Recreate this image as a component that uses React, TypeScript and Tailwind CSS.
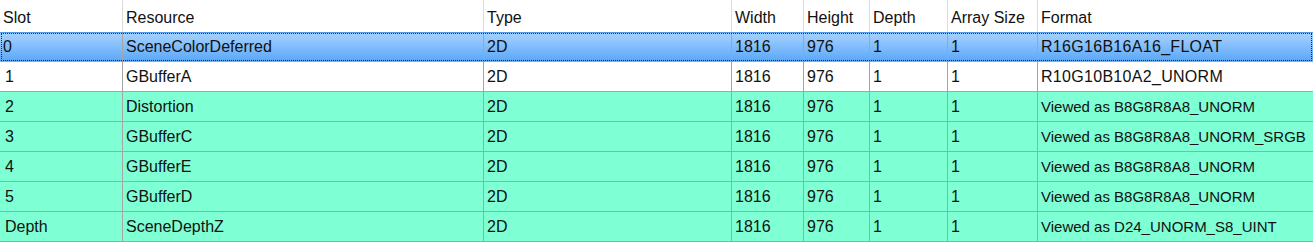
import React from "react";

const cols = "grid grid-cols-[123px_361px_248px_72px_66px_78px_90px_1fr]";

type Row = { slot: string; res: string; type: string; w: string; h: string; d: string; a: string; fmt: string; kind: "sel" | "white" | "green" };

const rows: Row[] = [
  { slot: "0", res: "SceneColorDeferred", type: "2D", w: "1816", h: "976", d: "1", a: "1", fmt: "R16G16B16A16_FLOAT", kind: "sel" },
  { slot: "1", res: "GBufferA", type: "2D", w: "1816", h: "976", d: "1", a: "1", fmt: "R10G10B10A2_UNORM", kind: "white" },
  { slot: "2", res: "Distortion", type: "2D", w: "1816", h: "976", d: "1", a: "1", fmt: "Viewed as B8G8R8A8_UNORM", kind: "green" },
  { slot: "3", res: "GBufferC", type: "2D", w: "1816", h: "976", d: "1", a: "1", fmt: "Viewed as B8G8R8A8_UNORM_SRGB", kind: "green" },
  { slot: "4", res: "GBufferE", type: "2D", w: "1816", h: "976", d: "1", a: "1", fmt: "Viewed as B8G8R8A8_UNORM", kind: "green" },
  { slot: "5", res: "GBufferD", type: "2D", w: "1816", h: "976", d: "1", a: "1", fmt: "Viewed as B8G8R8A8_UNORM", kind: "green" },
  { slot: "Depth", res: "SceneDepthZ", type: "2D", w: "1816", h: "976", d: "1", a: "1", fmt: "Viewed as D24_UNORM_S8_UINT", kind: "green" },
];

const headers = ["Slot", "Resource", "Type", "Width", "Height", "Depth", "Array Size", "Format"];

export default function App() {
  return (
    <div
      className="w-[1313px] h-[249px] bg-white text-[#111] text-[16px] leading-none overflow-hidden"
      style={{ fontFamily: '"Liberation Sans", Arial, sans-serif' }}
    >
      <div className={`${cols} h-[32px]`}>
        {headers.map((h, i) => (
          <div
            key={h}
            className={`flex items-center whitespace-nowrap overflow-hidden pl-[3px] pt-[4px] ${i < headers.length - 1 ? "border-r border-[#dcdcdc]" : ""}`}
          >
            {h}
          </div>
        ))}
      </div>
      {rows.map((r) => {
        const cells = [r.slot, r.res, r.type, r.w, r.h, r.d, r.a, r.fmt];
        const bg =
          r.kind === "sel"
            ? "bg-gradient-to-b from-[#a6d2ff] to-[#5aa7f7] border-t border-t-[#4e9cf0] outline-1 outline-dotted outline-[#1a2a40] -outline-offset-2"
            : r.kind === "green"
            ? "bg-[#7fffd4]"
            : "bg-white";
        return (
          <div key={r.slot} className={`${cols} h-[30px] border-b border-[#a5a5a5] ${bg}`}>
            {cells.map((c, i) => (
              <div
                key={i}
                className={`flex items-center whitespace-nowrap overflow-hidden ${i === 0 ? (r.kind === "sel" ? "pl-[3px]" : "pl-[5px]") : "pl-[3px]"} ${
                  i < cells.length - 1
                    ? "border-r border-[#a5a5a5]"
                    : c.startsWith("Viewed")
                    ? "text-[15px]"
                    : "tracking-[0.3px]"
                }`}
              >
                {c}
              </div>
            ))}
          </div>
        );
      })}
    </div>
  );
}
